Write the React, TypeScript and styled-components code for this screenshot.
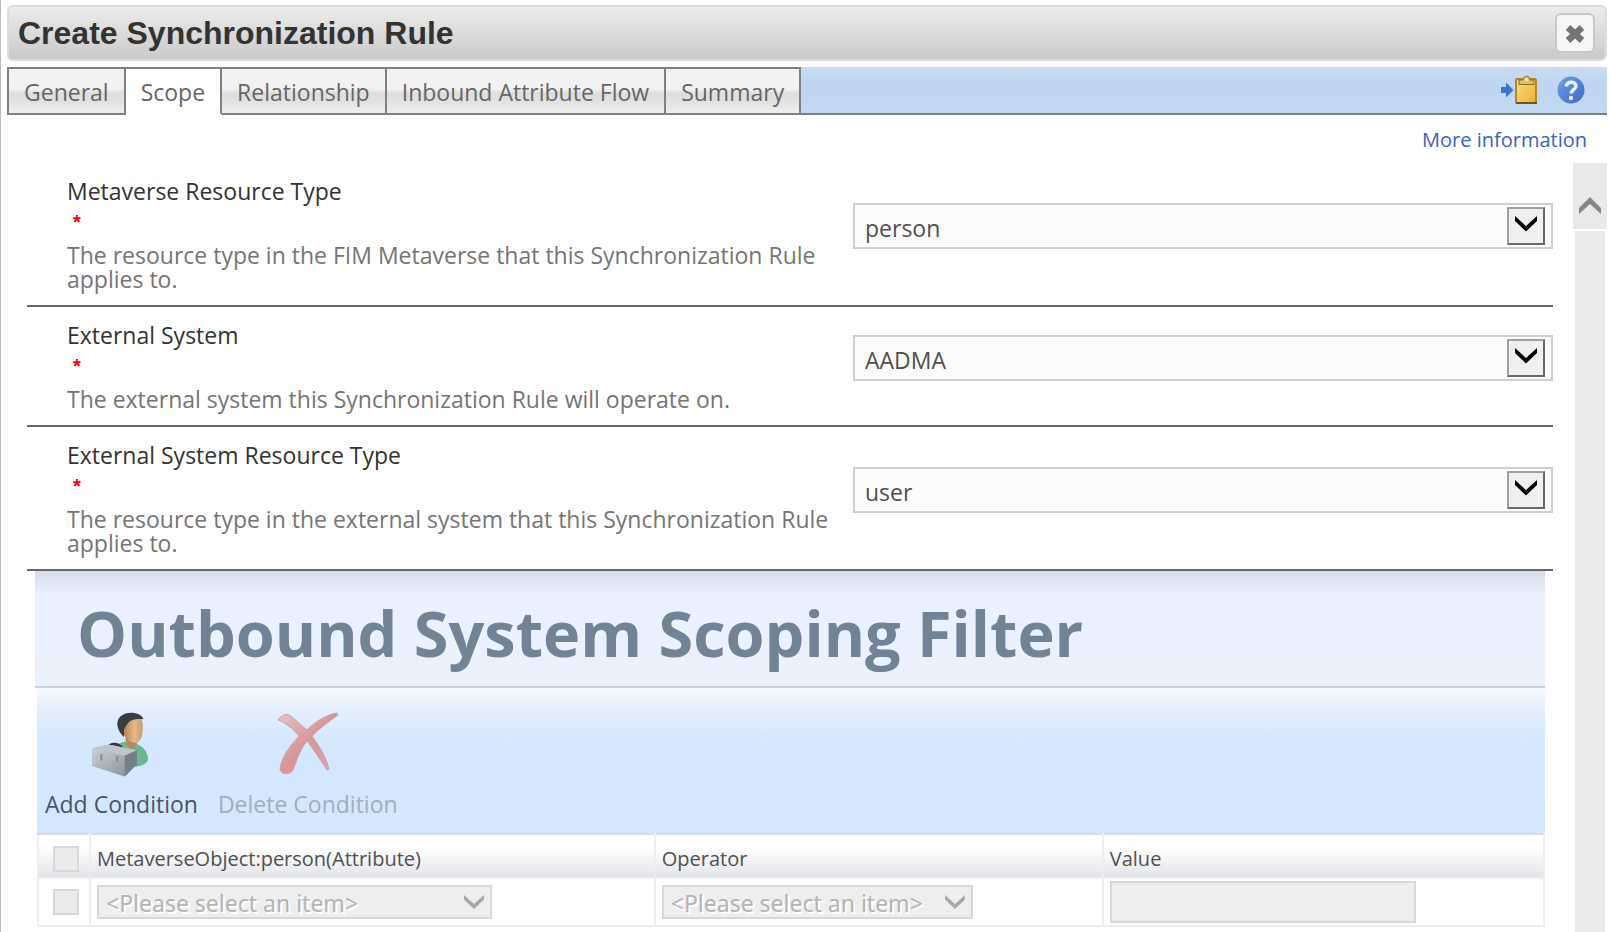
import React from "react";
import styled, { createGlobalStyle, css } from "styled-components";

const uiFont = `"Open Sans", "Noto Sans", sans-serif`;

const GlobalStyle = createGlobalStyle`
  * { box-sizing: border-box; }
  html, body { margin: 0; background: #fff; }
  body { font-family: ${uiFont}; font-size: 23px; color: #333; }
  button, select, input { font: inherit; color: inherit; }
`;

const Dialog = styled.main`
  min-height: 100vh;
  display: flex;
  flex-direction: column;
  border-left: 1px solid #bbb;
  padding: 5px 3px 0 6px;
`;

const TitleBar = styled.header`
  display: flex;
  align-items: center;
  justify-content: space-between;
  height: 56px;
  padding: 0 10px 0 9px;
  border: 2px solid #dcdcdc;
  border-radius: 6px;
  background: linear-gradient(#ececec, #cacaca);
`;

const Title = styled.h1`
  margin: 0;
  font: bold 32px/36px "Liberation Sans", Arial, sans-serif;
  color: #333;
`;

const CloseButton = styled.button`
  display: grid;
  place-items: center;
  width: 40px;
  height: 40px;
  padding: 2px 0 0;
  border: 2px solid #c8c8c8;
  border-radius: 6px;
  background: #f6f6f6;
`;

const TabStrip = styled.nav`
  display: flex;
  height: 48px;
  margin-top: 6px;
  border-bottom: 2px solid #808080;
  background: linear-gradient(#cadcf3, #c0d5f1 40%, #c2d7f2);
`;

const Tab = styled.button<{ $active?: boolean }>`
  height: 48px;
  padding: 2px 15px 0;
  border: 2px solid #808080;
  color: #666;
  line-height: 42px;
  background: linear-gradient(#f2f2f2 0 45%, #dedede 55%, #e2e2e2 75%, #efefef);
  & + & { border-left: 0; }
  ${(p) =>
    p.$active &&
    css`
      background: #fff;
      border-bottom-color: #fff;
    `}
`;

const StripTools = styled.div`
  display: flex;
  align-items: center;
  gap: 20px;
  margin-left: auto;
  padding-right: 22px;
`;

const ToolButton = styled.button`
  display: block;
  padding: 0;
  border: 0;
  background: none;
  svg { display: block; }
`;

const InfoRow = styled.div`
  display: flex;
  justify-content: flex-end;
  height: 48px;
  padding: 9px 20px 0 0;
`;

const InfoLink = styled.a`
  font-size: 20px;
  line-height: 32px;
  color: #3a63bd;
  text-decoration: none;
`;

const ScrollArea = styled.div`
  flex: 1;
  display: flex;
  gap: 20px;
  padding-left: 20px;
`;

const Content = styled.div`
  flex: 1;
  min-width: 0;
`;

const ScrollBar = styled.div`
  width: 34px;
  display: flex;
  flex-direction: column;
  gap: 2px;
`;

const ScrollUp = styled.button`
  display: grid;
  place-items: center;
  height: 66px;
  padding: 20px 0 0;
  border: 0;
  background: #e9e9e9;
`;

const ScrollTrack = styled.div`
  flex: 1;
  margin: 0 2px;
  background: #ebebeb;
`;

const FieldRow = styled.div`
  display: grid;
  grid-template-columns: 826fr 700fr;
  align-items: center;
  border-bottom: 2px solid #686868;
`;

const FieldText = styled.div`
  padding: 12px 8px 14px 40px;
`;

const FieldLabel = styled.label`
  display: block;
  line-height: 32px;
  color: #333;
`;

const Required = styled.span`
  display: block;
  height: 36px;
  padding-left: 6px;
  font: bold 20px/30px "Liberation Sans", Arial, sans-serif;
  color: #f00;
`;

const FieldHelp = styled.p`
  margin: 0;
  line-height: 24px;
  color: #757575;
`;

const SelectBox = styled.div`
  position: relative;
  margin-bottom: 16px;
`;

const Select = styled.select`
  display: block;
  width: 100%;
  height: 46px;
  padding: 3px 50px 0 10px;
  border: 2px solid #cfcfcf;
  border-radius: 0;
  appearance: none;
  background: #fcfcfc;
  color: #505050;
`;

const SelectArrow = styled.span`
  position: absolute;
  top: 4px;
  right: 8px;
  display: grid;
  place-items: center;
  width: 38px;
  height: 38px;
  padding-bottom: 4px;
  border: 2px solid;
  border-color: #a0a0a0 #696969 #696969 #a0a0a0;
  background: #f0f0f0;
  pointer-events: none;
`;

const FilterPanel = styled.section`
  margin: 0 8px;
`;

const FilterTitle = styled.h2`
  margin: 0;
  padding: 18px 42px 0;
  height: 117px;
  border-bottom: 2px solid #c5d2e2;
  background: linear-gradient(#d6dce8, #eaf1ff 24px, #eaf2fd);
  font-size: 63px;
  line-height: 88px;
  font-weight: 700;
  color: #728395;
`;

const Toolbar = styled.div`
  display: flex;
  gap: 20px;
  height: 145px;
  margin-left: 2px;
  padding: 22px 8px 0;
  background: linear-gradient(#f4f8fe, #e4effd 24px, #d6e8fe 48px, #d5e7fe);
`;

const ToolbarAction = styled.button`
  display: flex;
  flex-direction: column;
  align-items: center;
  gap: 6px;
  padding: 0;
  border: 0;
  background: none;
  height: 110px;
  color: #44576b;
  line-height: 32px;
  &:disabled { color: #a3aebd; }
`;

const ConditionTable = styled.table`
  width: calc(100% - 2px);
  margin-left: 2px;
  border-collapse: collapse;
  table-layout: fixed;
`;

const cell = css`
  padding: 0 6px;
  border: 2px solid #eee;
  text-align: left;
  vertical-align: middle;
`;

const HeadCell = styled.th`
  ${cell}
  height: 44px;
  padding-top: 6px;
  border-top-color: #dcdcdc;
  background: linear-gradient(#fff 30%, #e4e5ea);
  font-size: 20px;
  line-height: 28px;
  font-weight: 400;
  color: #505050;
`;

const Cell = styled.td`
  ${cell}
  height: 48px;
`;

const Check = styled.input`
  display: block;
  appearance: none;
  width: 26px;
  height: 26px;
  margin: 0 0 0 8px;
  border: 2px solid #d8d8d8;
  border-radius: 0;
  background: #ebebeb;
`;

const SmallSelectBox = styled.div<{ $width: number }>`
  position: relative;
  width: ${(p) => p.$width}px;
  svg {
    position: absolute;
    top: 9px;
    right: 8px;
    pointer-events: none;
  }
`;

const SmallSelect = styled.select`
  display: block;
  width: 100%;
  height: 34px;
  padding: 0 7px;
  border: 2px solid #d8d8d8;
  border-radius: 0;
  appearance: none;
  background: #eee;
  font-family: "Noto Sans", "Open Sans", sans-serif;
  color: #b4b4b4;
  text-shadow: 2px 2px 0 #fff;
  opacity: 1;
`;

const ValueInput = styled.input`
  display: block;
  width: 306px;
  height: 42px;
  border: 2px solid #d8d8d8;
  background: #eee;
`;

const Chevron = ({ size, color, up }: { size: number; color: string; up?: boolean }) => (
  <svg width={size} height={(size * 18) / 22} viewBox="0 0 22 18" aria-hidden="true">
    <path d={up ? "M0 11 11 0l11 11v6L11 7 0 17z" : "M0 1l11 10L22 1v5L11 16.500 0 6z"} fill={color} />
  </svg>
);

const CloseIcon = () => (
  <svg width="22" height="22" viewBox="0 0 22 22" aria-hidden="true">
    <path d="M4 4.500l14 13M18 4.500l-14 13" stroke="#757575" strokeWidth="6.500" />
  </svg>
);

const ClipboardIcon = () => (
  <svg width="36" height="30" viewBox="0 0 36 30" aria-hidden="true">
    <defs>
      <linearGradient id="board" x1="0" y1="0" x2="1" y2="1">
        <stop offset="0" stopColor="#f8dc86" />
        <stop offset="1" stopColor="#efb02e" />
      </linearGradient>
    </defs>
    <path d="M0 12h5V7.500l7.500 7.500L5 22.500V18H0z" fill="#3c74cc" />
    <rect x="15" y="4" width="20" height="24" rx="1" fill="url(#board)" stroke="#b98526" strokeWidth="2" />
    <path d="M15 28h21" stroke="#6f5220" strokeWidth="2" />
    <path d="M18 9.500V5h4c0-5 7-5 7 0h4v4.500z" fill="#d9c169" stroke="#8a6d25" />
    <circle cx="25.500" cy="4.500" r="1.500" fill="#fff2c0" />
  </svg>
);

const HelpIcon = () => (
  <svg width="28" height="28" viewBox="0 0 28 28" aria-hidden="true">
    <defs>
      <linearGradient id="help" x1="0" y1="0" x2="1" y2="1">
        <stop offset="0" stopColor="#6f9fe6" />
        <stop offset="1" stopColor="#3a6cc4" />
      </linearGradient>
    </defs>
    <circle cx="14" cy="14" r="13.500" fill="url(#help)" />
    <path
      d="M9.500 10.500c0-6 9.500-5.500 9.500-.5 0 3.500-4.800 3.500-4.800 7.500"
      fill="none"
      stroke="#e8f0fc"
      strokeWidth="3.500"
    />
    <circle cx="14" cy="22" r="2.200" fill="#e8f0fc" />
  </svg>
);

const PersonIcon = () => (
  <svg width="64" height="72" viewBox="-1 0 68 77" aria-hidden="true">
    <defs>
      <linearGradient id="face" x1="0" y1="0" x2="1" y2="0">
        <stop offset="0" stopColor="#b07a4a" />
        <stop offset="0.6" stopColor="#e2b98c" />
        <stop offset="1" stopColor="#c99a6a" />
      </linearGradient>
      <linearGradient id="box" x1="0" y1="0" x2="1" y2="1">
        <stop offset="0" stopColor="#ced6db" />
        <stop offset="1" stopColor="#7e8b93" />
      </linearGradient>
    </defs>
    <path d="M29 38c4-4 8-5 12-3 10 0 20 5 21 17 0 5-6 8-15 9L30 48z" fill="#69b990" />
    <path d="M38 28h12v8c-2 6-9 6-12 0z" fill="#bb8757" />
    <path d="M34 12c4-7 21-7 22 1 1 9 0 22-8 22-7 0-13-8-14-15z" fill="url(#face)" />
    <path d="M57 10C55 1 31-1 29 14c0 6 3 11 7 15 1-5-1-8 2-11 3-7 9-9 19-8z" fill="#3a3d40" />
    <path d="M19 42c1-8 14-7 16 2" fill="none" stroke="#34383b" strokeWidth="3" />
    <path d="M2 41l17-4 31 6v15L37 71 2 60z" fill="url(#box)" />
    <path d="M2 41l17-4 31 6-13 6z" fill="#bcc6cc" />
    <path d="M37 49l13-6v15L37 71z" fill="#72808a" />
    <path d="M12 47v7M29 49v7" stroke="#9a8480" strokeWidth="2" />
  </svg>
);

const CrossIcon = () => (
  <svg width="64" height="72" viewBox="0 0 64 72" aria-hidden="true">
    <defs>
      <linearGradient id="cross" x1="0" y1="0" x2="1" y2="1">
        <stop offset="0" stopColor="#e9c6ca" />
        <stop offset="0.5" stopColor="#d79596" />
        <stop offset="1" stopColor="#deaaad" />
      </linearGradient>
    </defs>
    <path
      d="M2 10C6 4 12 3 16 7l15 13C40 11 50 5 61 3l1 2C52 12 43 19 36 26c8 11 14 21 17 33l-2 1C44 49 38 40 31 31c-8 10-10 19-14 29-2 5-11 5-13 0C4 50 12 38 23 26 17 19 9 12 2 10z"
      fill="url(#cross)"
      stroke="#c9a3ab"
    />
  </svg>
);

const tabs = ["General", "Scope", "Relationship", "Inbound Attribute Flow", "Summary"];

const fields = [
  {
    id: "metaverse-type",
    label: "Metaverse Resource Type",
    help: "The resource type in the FIM Metaverse that this Synchronization Rule applies to.",
    value: "person",
  },
  {
    id: "external-system",
    label: "External System",
    help: "The external system this Synchronization Rule will operate on.",
    value: "AADMA",
  },
  {
    id: "external-type",
    label: "External System Resource Type",
    help: "The resource type in the external system that this Synchronization Rule applies to.",
    value: "user",
  },
];

const CheckColumn = styled.col`
  width: 52px;
`;

const AttributeColumn = styled.col`
  width: 37.5%;
`;

const OperatorColumn = styled.col`
  width: 29.75%;
`;

const ItemSelect = ({ label, width }: { label: string; width: number }) => (
  <SmallSelectBox $width={width}>
    <SmallSelect aria-label={label} disabled>
      <option>&lt;Please select an item&gt;</option>
    </SmallSelect>
    <Chevron size={20} color="#a8a8a8" />
  </SmallSelectBox>
);

export default function App() {
  return (
    <>
      <GlobalStyle />
      <Dialog>
        <TitleBar>
          <Title>Create Synchronization Rule</Title>
          <CloseButton aria-label="Close">
            <CloseIcon />
          </CloseButton>
        </TitleBar>
        <TabStrip>
          {tabs.map((name) => (
            <Tab key={name} $active={name === "Scope"}>
              {name}
            </Tab>
          ))}
          <StripTools>
            <ToolButton aria-label="Add to clipboard">
              <ClipboardIcon />
            </ToolButton>
            <ToolButton aria-label="Help">
              <HelpIcon />
            </ToolButton>
          </StripTools>
        </TabStrip>
        <InfoRow>
          <InfoLink href="#more">More information</InfoLink>
        </InfoRow>
        <ScrollArea>
          <Content>
            {fields.map((f) => (
              <FieldRow key={f.id}>
                <FieldText>
                  <FieldLabel htmlFor={f.id}>{f.label}</FieldLabel>
                  <Required>*</Required>
                  <FieldHelp>{f.help}</FieldHelp>
                </FieldText>
                <SelectBox>
                  <Select id={f.id}>
                    <option>{f.value}</option>
                  </Select>
                  <SelectArrow>
                    <Chevron size={22} color="#000" />
                  </SelectArrow>
                </SelectBox>
              </FieldRow>
            ))}
            <FilterPanel>
              <FilterTitle>Outbound System Scoping Filter</FilterTitle>
              <Toolbar>
                <ToolbarAction>
                  <PersonIcon />
                  Add Condition
                </ToolbarAction>
                <ToolbarAction disabled>
                  <CrossIcon />
                  Delete Condition
                </ToolbarAction>
              </Toolbar>
              <ConditionTable>
                <colgroup>
                  <CheckColumn />
                  <AttributeColumn />
                  <OperatorColumn />
                  <col />
                </colgroup>
                <thead>
                  <tr>
                    <HeadCell>
                      <Check type="checkbox" aria-label="Select all conditions" disabled />
                    </HeadCell>
                    <HeadCell>MetaverseObject:person(Attribute)</HeadCell>
                    <HeadCell>Operator</HeadCell>
                    <HeadCell>Value</HeadCell>
                  </tr>
                </thead>
                <tbody>
                  <tr>
                    <Cell>
                      <Check type="checkbox" aria-label="Select condition" disabled />
                    </Cell>
                    <Cell>
                      <ItemSelect label="Attribute" width={395} />
                    </Cell>
                    <Cell>
                      <ItemSelect label="Operator" width={311} />
                    </Cell>
                    <Cell>
                      <ValueInput type="text" aria-label="Value" disabled />
                    </Cell>
                  </tr>
                </tbody>
              </ConditionTable>
            </FilterPanel>
          </Content>
          <ScrollBar>
            <ScrollUp aria-label="Scroll up">
              <Chevron size={22} color="#868686" up />
            </ScrollUp>
            <ScrollTrack />
          </ScrollBar>
        </ScrollArea>
      </Dialog>
    </>
  );
}
